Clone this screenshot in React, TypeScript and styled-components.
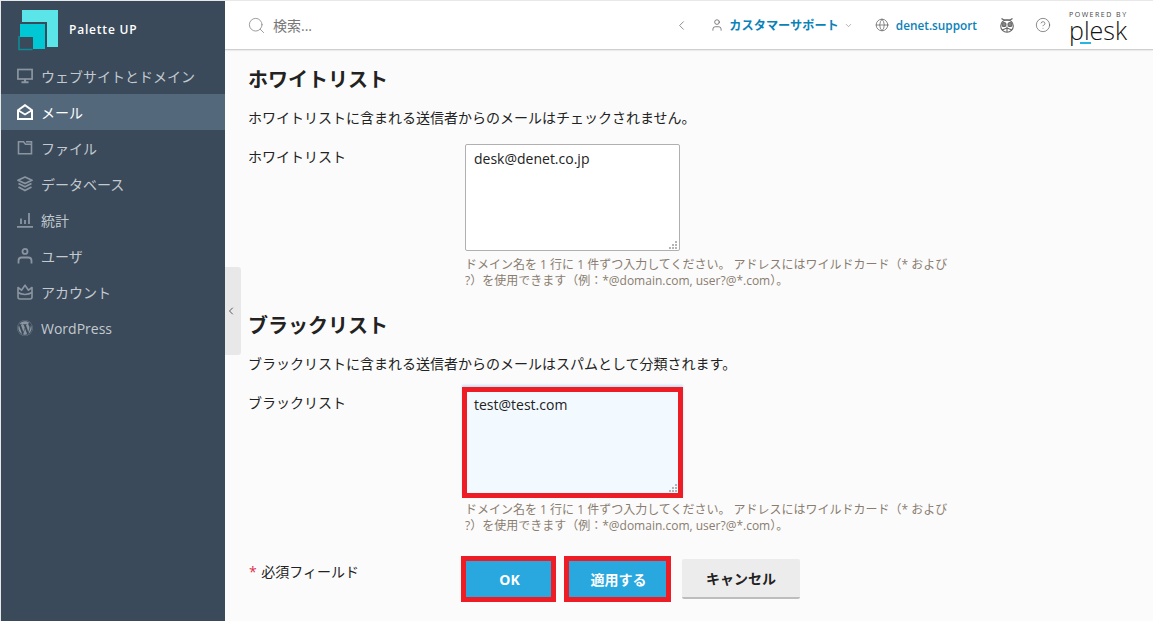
import React from 'react';
import styled, { createGlobalStyle } from 'styled-components';
import { ChevronDown, ChevronLeft, CircleHelp, Globe, Search, User } from 'lucide-react';
import { FaWordpress } from 'react-icons/fa';

const FONT = `'Open Sans', 'Noto Sans CJK JP', sans-serif`;

const GlobalStyle = createGlobalStyle`
  html, body {
    margin: 0;
    padding: 0;
    height: 100%;
    overflow: hidden;
    background: #fbfbfb;
  }
  * {
    box-sizing: border-box;
  }
`;

const navIcons: Record<string, React.ReactNode> = {
  monitor: (
    <svg width="16" height="16" viewBox="0 0 16 16" fill="none" stroke="currentColor" strokeWidth="1.7">
      <rect x="0.9" y="1.5" width="14.2" height="9.5" />
      <path d="M4.500 14.200h7M8 11v3" strokeWidth="2" />
    </svg>
  ),
  mail: (
    <svg width="16" height="16" viewBox="0 0 16 16" fill="none" stroke="currentColor" strokeWidth="2">
      <path d="M1 6.200 8 1.200l7 5V15H1z" />
      <path d="M1.500 6.500 8 10.500l6.500-4" strokeWidth="1.700" />
    </svg>
  ),
  folder: (
    <svg width="16" height="16" viewBox="0 0 16 16" fill="none" stroke="currentColor" strokeWidth="1.600">
      <path d="M1.500 1.800h5l2 2.400h6v9.600h-13z" />
      <path d="M9 1.800h5.500v2" />
    </svg>
  ),
  layers: (
    <svg width="16" height="16" viewBox="0 0 16 16" fill="none" stroke="currentColor" strokeWidth="1.700" strokeLinejoin="round">
      <path d="M8 1 15 4.300 8 7.600 1 4.300z" />
      <path d="M1.500 7.600 8 10.800l6.500-3.200M1.500 11l6.500 3.600 6.500-3.600" />
    </svg>
  ),
  chart: (
    <svg width="16" height="16" viewBox="0 0 16 16" fill="none" stroke="currentColor" strokeWidth="1.800">
      <path d="M0 14.800h16M4 12V6.500M8 12V8M12 12V1" />
    </svg>
  ),
  user: (
    <svg width="16" height="16" viewBox="0 0 16 16" fill="none" stroke="currentColor" strokeWidth="1.800">
      <circle cx="8" cy="3.400" r="2.500" />
      <path d="M1.500 15.500v-2.700c0-2 1.400-3.300 3.200-3.300h6.600c1.800 0 3.200 1.300 3.200 3.300v2.700" />
    </svg>
  ),
  crown: (
    <svg width="16" height="16" viewBox="0 0 16 16" fill="none" stroke="currentColor" strokeWidth="1.600" strokeLinejoin="round">
      <path d="M1 3.500 4.500 6.200 8 1.200l3.500 5L15 3.500V13c0 1.200-.8 2-2 2H3c-1.200 0-2-.8-2-2z" />
      <path d="M1 8.500c4 2.600 10 2.600 14 0" />
    </svg>
  ),
};

type NavEntry = { label: string; icon: React.ReactNode; active?: boolean };

const navItems: NavEntry[] = [
  { label: 'ウェブサイトとドメイン', icon: navIcons.monitor },
  { label: 'メール', icon: navIcons.mail, active: true },
  { label: 'ファイル', icon: navIcons.folder },
  { label: 'データベース', icon: navIcons.layers },
  { label: '統計', icon: navIcons.chart },
  { label: 'ユーザ', icon: navIcons.user },
  { label: 'アカウント', icon: navIcons.crown },
  { label: 'WordPress', icon: <FaWordpress size={16} /> },
];

const HELP_TEXT =
  'ドメイン名を 1 行に 1 件ずつ入力してください。 アドレスにはワイルドカード（* および ?）を使用できます（例：*@domain.com, user?@*.com）。';

const ResizeGrip = ({ marked }: { marked?: boolean }) => (
  <GripMark $marked={marked} width="9" height="9" viewBox="0 0 9 9" fill="#b4b4b4">
    <rect x="6" y="0" width="2" height="2" />
    <rect x="3" y="3" width="2" height="2" />
    <rect x="6" y="3" width="2" height="2" />
    <rect x="0" y="6" width="2" height="2" />
    <rect x="3" y="6" width="2" height="2" />
    <rect x="6" y="6" width="2" height="2" />
  </GripMark>
);

const App = () => {
  return (
    <Page>
      <GlobalStyle />
      <Sidebar>
        <Brand>
          <svg width="42" height="42" viewBox="0 0 42 42">
            <path d="M4 1H40V38H29V13H4z" fill="#5be5e8" />
            <path d="M2 15H27V40H15V28H2z" fill="#00c7d4" />
            <path d="M1 27v13.500h13.500" fill="none" stroke="#0b8c99" strokeWidth="1.600" />
          </svg>
          <BrandName>Palette UP</BrandName>
        </Brand>
        <NavList>
          {navItems.map((item) => (
            <NavItem key={item.label} $active={item.active}>
              <NavIcon $active={item.active}>{item.icon}</NavIcon>
              {item.label}
            </NavItem>
          ))}
        </NavList>
      </Sidebar>
      <Main>
        <Header>
          <SearchBox>
            <Search size={19} strokeWidth={1.100} color="#8f8f8f" />
            <SearchHint>検索...</SearchHint>
          </SearchBox>
          <HeaderRight>
            <ChevronLeft size={15} strokeWidth={1.300} color="#777" />
            <SupportLink>
              <User size={14} strokeWidth={1.400} color="#666" />
              <HeaderLink $cjk>カスタマーサポート</HeaderLink>
              <ChevronDown size={9} strokeWidth={1.500} color="#777" />
            </SupportLink>
            <DomainLink>
              <Globe size={14} strokeWidth={1.300} color="#666" />
              <HeaderLink>denet.support</HeaderLink>
            </DomainLink>
            <OwlMark width="16" height="16" viewBox="0 0 16 16" fill="none" stroke="#666" strokeWidth="1.100">
              <path d="M2.500 1.500C4 3 5.500 3.200 8 3.200s4-.2 5.500-1.700" />
              <circle cx="8" cy="9" r="6.300" />
              <circle cx="5" cy="7.500" r="2" fill="#888" />
              <circle cx="11" cy="7.500" r="2" fill="#888" />
              <path d="M8 9.500v5.500M3 13l5-2 5 2" />
            </OwlMark>
            <CircleHelp size={16} strokeWidth={1} color="#555" />
            <PleskBadge>
              <PoweredBy>POWERED BY</PoweredBy>
              <PleskWord>plesk</PleskWord>
              <PleskAccent />
            </PleskBadge>
          </HeaderRight>
        </Header>
        <Content>
          <Heading>ホワイトリスト</Heading>
          <Description>ホワイトリストに含まれる送信者からのメールはチェックされません。</Description>
          <FieldRow>
            <FieldLabel>ホワイトリスト</FieldLabel>
            <FieldBody>
              <InputWrap>
                <ListInput defaultValue="desk@denet.co.jp" readOnly />
                <ResizeGrip />
              </InputWrap>
              <HelpText>{HELP_TEXT}</HelpText>
            </FieldBody>
          </FieldRow>
          <Heading>ブラックリスト</Heading>
          <Description>ブラックリストに含まれる送信者からのメールはスパムとして分類されます。</Description>
          <FieldRow>
            <FieldLabel>ブラックリスト</FieldLabel>
            <FieldBody>
              <InputWrap $marked>
                <ListInput $marked defaultValue="test@test.com" readOnly />
                <ResizeGrip marked />
              </InputWrap>
              <HelpText $marked>{HELP_TEXT}</HelpText>
            </FieldBody>
          </FieldRow>
          <ActionRow>
            <RequiredNote>
              <Star>*</Star> 必須フィールド
            </RequiredNote>
            <Buttons>
              <PrimaryButton type="button" $wide={95}>OK</PrimaryButton>
              <PrimaryButton type="button" $wide={107}>適用する</PrimaryButton>
              <CancelButton type="button">キャンセル</CancelButton>
            </Buttons>
          </ActionRow>
        </Content>
      </Main>
      <SidebarHandle>
        <ChevronLeft size={12} strokeWidth={1.600} color="#333" />
      </SidebarHandle>
    </Page>
  );
};

export default App;

const Page = styled.div`
  position: relative;
  display: flex;
  width: 1153px;
  height: 621px;
  padding: 1px 0 0 1px;
  overflow: hidden;
  background: #e8e8e8;
  font-family: ${FONT};
`;

const Sidebar = styled.aside`
  flex: none;
  width: 224px;
  background: #3a4a5a;
`;

const Brand = styled.div`
  display: flex;
  align-items: center;
  gap: 9px;
  height: 57px;
  padding: 0 0 0 17px;
`;

const BrandName = styled.span`
  color: #fff;
  font-size: 12px;
  font-weight: 600;
  letter-spacing: 0.800px;
`;

const NavList = styled.nav`
  display: flex;
  flex-direction: column;
`;

const NavItem = styled.div<{ $active?: boolean }>`
  display: flex;
  align-items: center;
  gap: 8px;
  height: 36px;
  padding-left: 16px;
  color: ${({ $active }) => ($active ? '#ffffff' : '#c3c9cf')};
  background: ${({ $active }) => ($active ? '#54687c' : 'transparent')};
  font-size: 14px;
`;

const NavIcon = styled.span<{ $active?: boolean }>`
  display: flex;
  width: 16px;
  color: ${({ $active }) => ($active ? '#ffffff' : '#8b95a0')};
`;

const Main = styled.div`
  flex: 1;
  display: flex;
  flex-direction: column;
  min-width: 0;
  background: #fbfbfb;
`;

const Header = styled.header`
  flex: none;
  display: flex;
  align-items: center;
  justify-content: space-between;
  height: 49px;
  padding: 0 26px 0 22px;
  background: #fff;
  border-bottom: 1px solid #cfcfcf;
  box-shadow: 0 1px 1px rgba(0, 0, 0, 0.06);
`;

const SearchBox = styled.div`
  display: flex;
  align-items: center;
  gap: 7px;
`;

const SearchHint = styled.span`
  color: #777;
  font-size: 14px;
`;

const HeaderRight = styled.div`
  display: flex;
  align-items: center;
  gap: 20px;
`;

const SupportLink = styled.div`
  display: flex;
  align-items: center;
  gap: 5px;
  margin-left: 1px;
`;

const DomainLink = styled.div`
  display: flex;
  align-items: center;
  gap: 7px;
  margin-left: 2px;
`;

const HeaderLink = styled.span<{ $cjk?: boolean }>`
  color: #0a82b8;
  font-size: ${({ $cjk }) => ($cjk ? '12.200px' : '11.800px')};
  font-weight: 600;
`;

const OwlMark = styled.svg`
  margin-left: 2px;
`;

const PleskBadge = styled.div`
  position: relative;
  display: flex;
  flex-direction: column;
  align-items: flex-start;
  width: 58px;
  margin-left: -2px;
`;

const PoweredBy = styled.span`
  color: #444;
  font-size: 7px;
  line-height: 9px;
  letter-spacing: 1.500px;
  white-space: nowrap;
`;

const PleskWord = styled.span`
  color: #111;
  font-size: 25px;
  font-weight: 300;
  line-height: 22px;
`;

const PleskAccent = styled.span`
  position: absolute;
  left: 11px;
  bottom: -3px;
  width: 11px;
  height: 2px;
  background: #2ab4e0;
`;

const Content = styled.main`
  flex: 1;
  padding: 16px 0 0 23px;
  color: #222;
`;

const Heading = styled.h2`
  margin: 0 0 15px;
  font-size: 20px;
  font-weight: 700;
  line-height: 27px;
  color: #222;
`;

const Description = styled.p`
  margin: 0 0 16px;
  font-size: 14px;
  line-height: 20px;
`;

const FieldRow = styled.div`
  display: grid;
  grid-template-columns: 217px 486px;
  margin-bottom: 23px;
`;

const FieldLabel = styled.label`
  padding-top: 3px;
  font-size: 14px;
  line-height: 20px;
`;

const FieldBody = styled.div`
  display: flex;
  flex-direction: column;
`;

const InputWrap = styled.div<{ $marked?: boolean }>`
  position: relative;
  width: ${({ $marked }) => ($marked ? '221px' : '215px')};
  height: ${({ $marked }) => ($marked ? '111px' : '107px')};
  margin: ${({ $marked }) => ($marked ? '-3px 0 0 -3px' : '0')};
`;

const ListInput = styled.textarea<{ $marked?: boolean }>`
  display: block;
  width: 100%;
  height: 100%;
  padding: ${({ $marked }) => ($marked ? '3px 7px' : '4px 8px')};
  resize: none;
  outline: none;
  color: #222;
  font-family: ${FONT};
  font-size: 14px;
  line-height: 20px;
  background: ${({ $marked }) => ($marked ? '#f3faff' : '#fff')};
  border: ${({ $marked }) => ($marked ? '5px solid #ee1c25' : '1px solid #b0b0b0')};
  border-radius: ${({ $marked }) => ($marked ? '0' : '2px')};
  box-shadow: ${({ $marked }) => ($marked ? '0 -2px 2px #c6e2f5' : 'none')};
`;

const GripMark = styled.svg<{ $marked?: boolean }>`
  position: absolute;
  right: ${({ $marked }) => ($marked ? '5px' : '2px')};
  bottom: ${({ $marked }) => ($marked ? '5px' : '1px')};
`;

const HelpText = styled.div<{ $marked?: boolean }>`
  margin-top: ${({ $marked }) => ($marked ? '4px' : '6px')};
  color: #8a7d70;
  font-size: 12px;
  line-height: 16px;
`;

const ActionRow = styled.div`
  display: grid;
  grid-template-columns: 213px 1fr;
  align-items: start;
  margin-top: -1px;
`;

const RequiredNote = styled.div`
  padding: 6px 0 0 1px;
  font-size: 14px;
  line-height: 20px;
`;

const Star = styled.span`
  color: #d9304f;
  margin-right: 1px;
`;

const Buttons = styled.div`
  display: flex;
  align-items: center;
  gap: 8px;
`;

const PrimaryButton = styled.button<{ $wide: number }>`
  width: ${({ $wide }) => $wide}px;
  height: 46px;
  padding: 0 0 0 2px;
  color: #fff;
  font-family: ${FONT};
  font-size: 14px;
  font-weight: 700;
  background: #29a8df;
  border: 5px solid #ee1c25;
`;

const CancelButton = styled.button`
  width: 118px;
  height: 40px;
  margin-left: 3px;
  color: #222;
  font-family: ${FONT};
  font-size: 14px;
  font-weight: 700;
  background: #ececec;
  border: none;
  border-bottom: 2px solid #bdbdbd;
  border-radius: 2px;
`;

const SidebarHandle = styled.div`
  position: absolute;
  left: 225px;
  top: 267px;
  display: flex;
  align-items: center;
  justify-content: flex-start;
  width: 16px;
  height: 88px;
  background: #e8e8e8;
  border-radius: 0 3px 3px 0;
`;
